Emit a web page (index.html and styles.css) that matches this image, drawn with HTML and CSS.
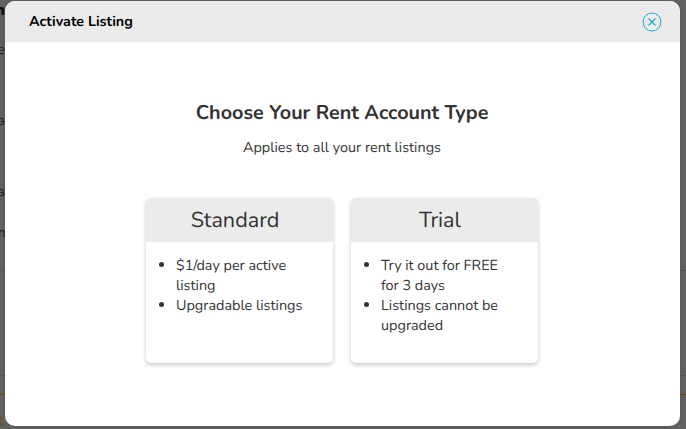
FILE: index.html
```html
<!DOCTYPE html>
<html lang="en">
<head>
<meta charset="utf-8">
<title>Activate Listing</title>
<link rel="stylesheet" href="styles.css">
</head>
<body>
<div class="page" aria-hidden="true">
  <span class="peek peek-title">n</span>
  <span class="peek peek-one">e</span>
  <span class="peek peek-two">Ca</span>
  <span class="peek peek-three">a</span>
  <span class="peek peek-four">m</span>
  <div class="rule rule-top"></div>
  <div class="rule rule-mid"></div>
  <div class="rule rule-accent"></div>
  <span class="peek peek-link">t</span>
</div>
<main class="modal">
  <header class="modal-header">
    <h1 class="modal-title">Activate Listing</h1>
    <button class="close" aria-label="Close">
      <svg width="20" height="20" viewBox="0 0 20 20" fill="none" stroke="#22a5d8">
        <circle cx="10" cy="10" r="9"/>
        <path d="M6.5 6.5l7 7M13.5 6.5l-7 7" stroke-width="1.1"/>
      </svg>
    </button>
  </header>
  <section class="content">
    <h2 class="heading">Choose Your Rent Account Type</h2>
    <p class="subheading">Applies to all your rent listings</p>
    <div class="cards">
      <article class="card">
        <h3 class="card-title">Standard</h3>
        <ul class="features">
          <li>$1/day per active<br>listing</li>
          <li>Upgradable listings</li>
        </ul>
      </article>
      <article class="card">
        <h3 class="card-title">Trial</h3>
        <ul class="features">
          <li>Try it out for FREE<br>for 3 days</li>
          <li>Listings cannot be<br>upgraded</li>
        </ul>
      </article>
    </div>
  </section>
</main>
</body>
</html>
```
FILE: styles.css
```css
* { box-sizing: border-box; }
body {
  margin: 0;
  width: 686px;
  height: 429px;
  overflow: hidden;
  background: #636363;
  color: #333;
  font-family: Nunito, Lato, sans-serif;
  font-size: 14.4px;
  line-height: 20px;
  text-rendering: geometricPrecision;
}
h1, h2, h3, p, ul { margin: 0; padding: 0; }
.page { position: absolute; inset: 0; overflow: hidden; color: #222; }
.peek { position: absolute; right: 681px; white-space: nowrap; }
.peek-title { top: 0; color: #111; font-size: 16px; font-weight: 900; }
.peek-one { top: 40px; }
.peek-two { top: 111px; }
.peek-three { top: 182px; }
.peek-four { top: 223px; right: 676px; }
.peek-link { top: 411px; right: 683px; color: #7d4b0b; font-weight: 700; }
.rule { position: absolute; left: 0; right: 0; height: 1px; background: #585858; }
.rule-top { top: 270px; }
.rule-mid { top: 375px; }
.rule-accent { top: 394px; background: #784600; }
.modal {
  position: relative;
  width: 675px;
  height: 425px;
  margin: 1px 0 0 5px;
  border-radius: 10px;
  background: #fff;
  overflow: hidden;
  box-shadow: 0 0 8px rgba(0, 0, 0, .15);
}
.modal-header {
  display: flex;
  align-items: center;
  justify-content: space-between;
  height: 41px;
  padding: 0 18px 0 24px;
  background: #ebebeb;
}
.modal-title { padding-top: 3px; color: #000; font-size: 14.3px; line-height: 20px; font-weight: 700; }
.close { display: flex; padding: 0; border: 0; background: none; }
.content { display: flex; flex-direction: column; align-items: center; padding: 56px 1px 0 0; }
.heading { font-size: 19.8px; line-height: 30px; font-weight: 700; }
.subheading { margin-top: 10px; }
.cards { display: flex; gap: 18px; margin-top: 40px; }
.card {
  width: 187px;
  height: 165px;
  border-radius: 5px;
  overflow: hidden;
  background: #fff;
  box-shadow: 0 2px 4px rgba(0, 0, 0, .22);
}
.card-title {
  height: 44px;
  padding-right: 9px;
  background: #ebebeb;
  font-size: 21.6px;
  line-height: 44px;
  font-weight: 400;
  text-align: center;
}
.features { padding: 14px 0 0 30px; list-style: none; white-space: nowrap; }
.features li::before {
  content: "";
  float: left;
  width: 5px;
  height: 5px;
  margin: 6px 0 0 -17px;
  border-radius: 50%;
  background: #333;
}
```
